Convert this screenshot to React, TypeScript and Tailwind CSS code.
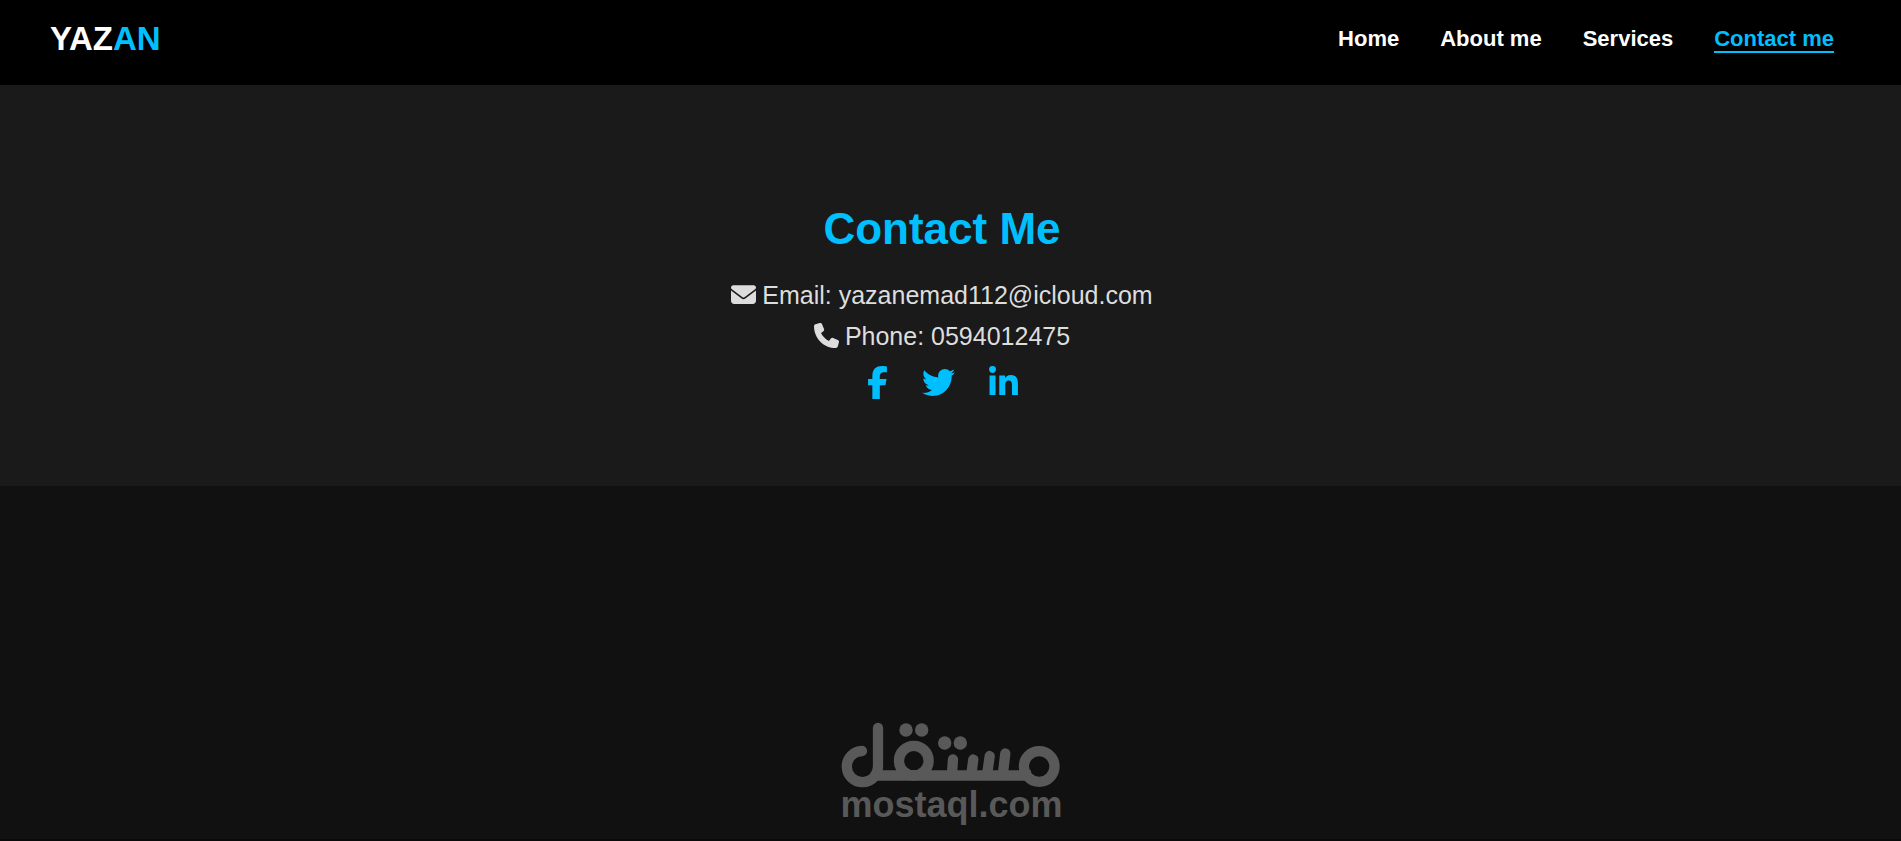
import React from 'react';
import { FaEnvelope, FaFacebookF, FaLinkedinIn, FaPhone, FaTwitter } from 'react-icons/fa6';

const navLinks = [
  { label: 'Home', href: '#home' },
  { label: 'About me', href: '#about' },
  { label: 'Services', href: '#services' },
  { label: 'Contact me', href: '#contact', active: true },
];

const socials = [
  { label: 'Facebook', Icon: FaFacebookF, size: 'h-[33px] w-[21px]' },
  { label: 'Twitter', Icon: FaTwitter, size: 'h-[33px] w-[33px]' },
  { label: 'LinkedIn', Icon: FaLinkedinIn, size: 'h-[33px] w-[29px]' },
];

const Header: React.FC = () => {
  return (
    <header className="bg-black h-[85px] pt-5 pl-[50px] pr-[67px] flex items-start justify-between">
      <a href="#home" className="text-[33px] leading-[38px] font-bold text-white">
        YAZ<span className="text-[#00bfff]">AN</span>
      </a>
      <nav className="pt-[6px] flex gap-[41px]">
        {navLinks.map((link) => (
          <a
            key={link.label}
            href={link.href}
            className={
              link.active
                ? 'text-[22px] leading-[25px] font-bold text-[#00bfff] border-b-2 border-[#00bfff]'
                : 'text-[22px] leading-[25px] font-bold text-white'
            }
          >
            {link.label}
          </a>
        ))}
      </nav>
    </header>
  );
};

const Contact: React.FC = () => {
  return (
    <section id="contact" className="bg-[#1a1a1a] pt-[119px] pb-[87px] pr-[17px] flex flex-col items-center">
      <h2 className="text-[44px] leading-[50px] font-bold text-[#00bfff]">Contact Me</h2>
      <p className="mt-[21px] h-[41px] flex items-center gap-[6px] text-[25px] text-[#ddd]">
        <FaEnvelope className="size-[25px] mb-0.5" />
        <span>Email: yazanemad112@icloud.com</span>
      </p>
      <p className="h-[41px] flex items-center gap-[6px] text-[25px] text-[#ddd]">
        <FaPhone className="size-[25px] mb-0.5" />
        <span>Phone: 0594012475</span>
      </p>
      <div className="mt-[9px] flex gap-[34px] text-[#00bfff]">
        {socials.map(({ label, Icon, size }) => (
          <a key={label} href="#contact" aria-label={label}>
            <Icon className={size} />
          </a>
        ))}
      </div>
    </section>
  );
};

const Watermark: React.FC = () => {
  return (
    <div className="w-[220px] text-[#595959]">
      <svg viewBox="0 0 220 66" className="w-full" fill="none" stroke="currentColor" strokeWidth="10.3" strokeLinecap="round">
        {/* lam */}
        <path d="M21 29a15.600 15.600 0 1 0 16 15.500V6" />
        {/* baseline */}
        <path d="M33 53.500H190" strokeLinecap="butt" />
        {/* qaf */}
        <circle cx="72.800" cy="38.700" r="14.800" />
        {/* ta and sin teeth */}
        <path d="M111 51L112 37.500M130.500 51L132.300 37.500M146.300 51L148.700 34M162 51L164.300 31.500" />
        {/* mim */}
        <circle cx="198.200" cy="44.500" r="15.300" />
        <g fill="currentColor" stroke="none">
          <circle cx="65" cy="8" r="6.700" />
          <circle cx="80.700" cy="8" r="6.700" />
          <circle cx="103.700" cy="21" r="6.700" />
          <circle cx="119.300" cy="21" r="6.700" />
        </g>
      </svg>
      <p className="text-center text-[36px] leading-[34px] font-bold">mostaql.com</p>
    </div>
  );
};

const App: React.FC = () => {
  return (
    <div className="min-h-screen flex flex-col bg-[#111] font-['Liberation_Sans',Arial,sans-serif]">
      <Header />
      <Contact />
      <div className="flex-1 flex items-end justify-center pb-[17px]">
        <Watermark />
      </div>
      <div className="h-[2px] bg-[#0a0a0a]" />
    </div>
  );
};

export default App;
